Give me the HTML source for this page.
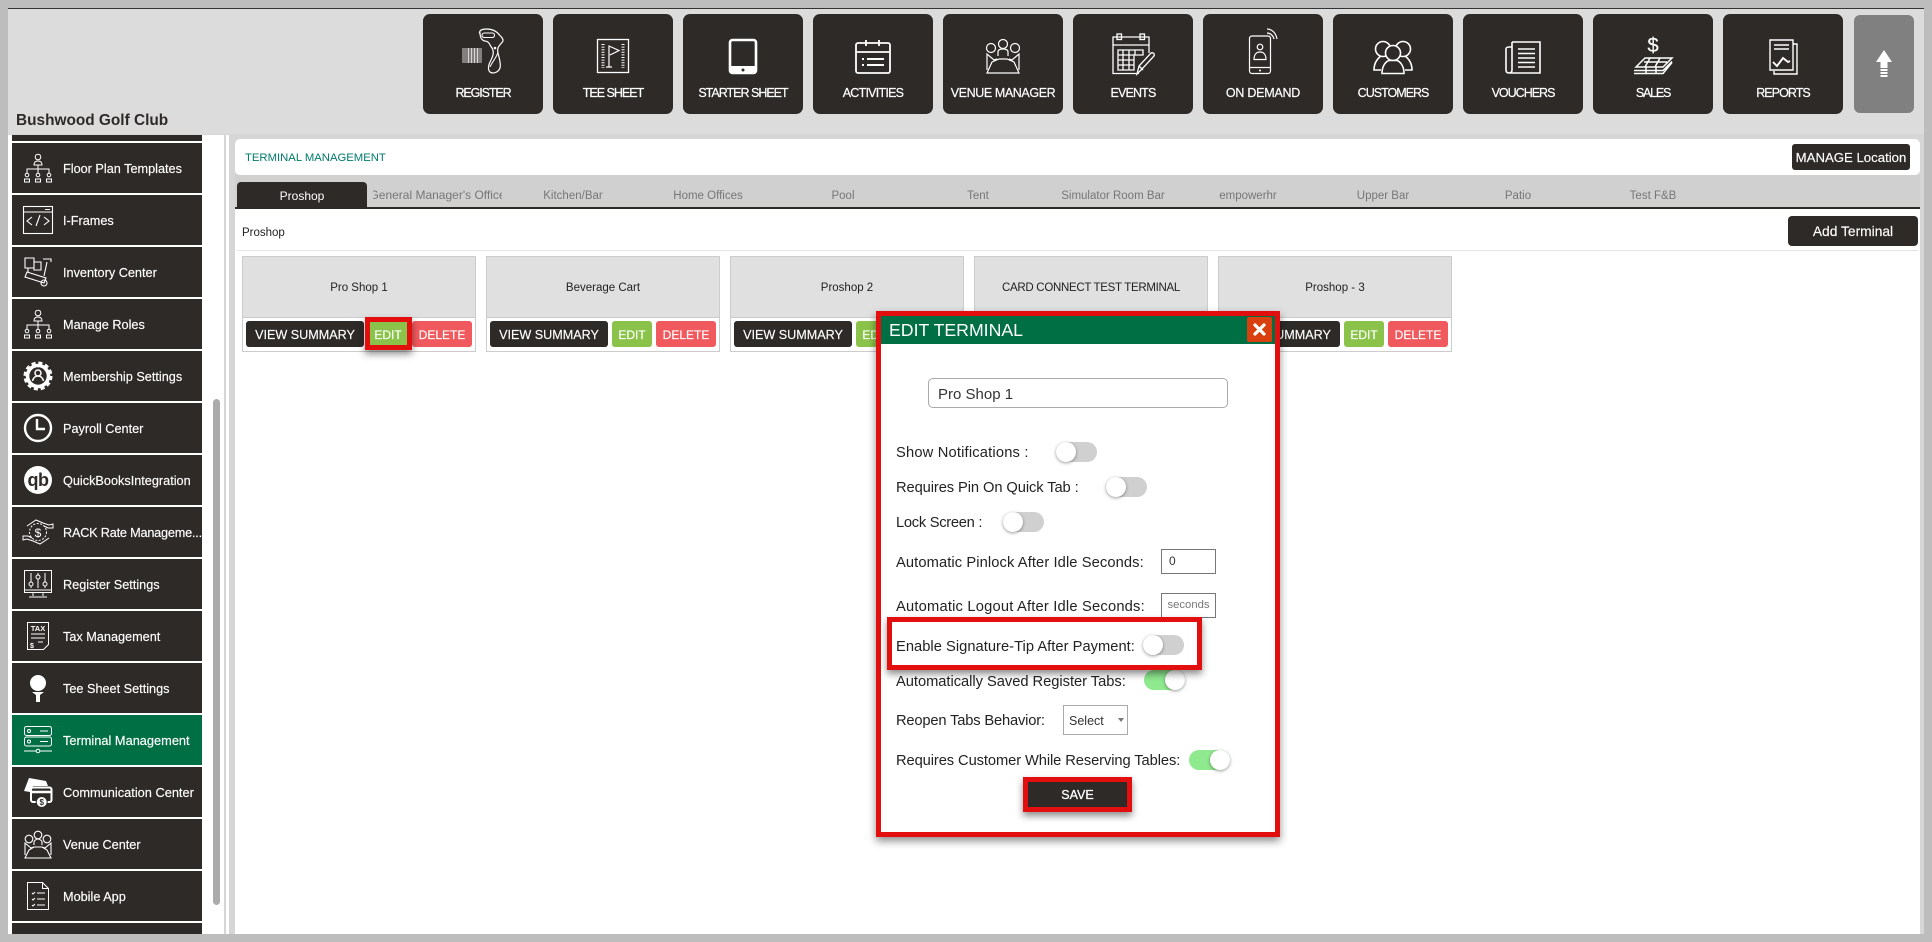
<!DOCTYPE html>
<html><head><meta charset="utf-8"><title>Terminal Management</title>
<style>
html,body{margin:0;padding:0;width:1932px;height:942px;overflow:hidden;background:#bdbdbd;font-family:"Liberation Sans",sans-serif}
div,span{position:absolute;box-sizing:border-box}
.c{display:flex;align-items:center;justify-content:center;white-space:nowrap}
.hb{top:14px;width:120px;height:100px;background:#2e2a28;border-radius:7px;color:#fff;font-size:12.5px;text-align:center;padding-top:71px;line-height:16px;white-space:nowrap;-webkit-text-stroke:.2px #fff}
.si{left:12px;width:190px;height:50px;background:#2e2a28;color:#fff;font-size:12.7px;line-height:52px;padding-left:51px;white-space:nowrap;-webkit-text-stroke:.15px #fff}
.tab{top:182px;width:130px;height:25px;color:#777;font-size:11.5px;line-height:28px;text-align:center;white-space:nowrap;overflow:hidden}
.card{top:256px;width:234px;height:96px;border:1px solid #ccc;background:#fff}
.ch{left:0;top:0;width:232px;height:61px;background:#e0e0e0;border-bottom:1px solid #ccc;color:#222;font-size:11.5px;padding-top:2px}
.b{top:64px;height:26px;border-radius:3px;color:#fff;font-size:12.6px;padding-top:1px;-webkit-text-stroke:.15px #fff}
.v{left:3px;width:118px;background:#2e2a28}
.e{left:125px;width:40px;background:#8bc34a;font-size:12px}
.d{left:169px;width:60px;background:#f0595e;font-size:12px}
.l{left:896px;color:#222;font-size:14.7px;white-space:nowrap;line-height:20px}
.t{width:41px;height:20px;border-radius:10px;background:#d0d0d0}
.t i{position:absolute;left:0;top:0;width:20px;height:20px;border-radius:50%;background:#fff;box-shadow:0 1px 3px rgba(0,0,0,.4)}
.t.on{background:#8fe98f}.t.on i{left:21px}
.rb{border:5px solid #e30f0f;box-shadow:0 4px 7px rgba(0,0,0,.45)}
</style></head><body>
<div style="left:8px;top:8px;width:1916px;height:1px;background:#333"></div>
<div style="left:8px;top:9px;width:1916px;height:125px;background:#dcdcdc"></div>
<div style="left:8px;top:134px;width:1916px;height:800px;background:#d6d6d6"></div>
<div style="left:16px;top:111px;font-size:15.4px;font-weight:bold;color:#2e2a28;line-height:20px;white-space:nowrap">Bushwood Golf Club</div>

<div class="hb" style="left:423px;letter-spacing:-1.1px">REGISTER</div>
<div class="hb" style="left:553px;letter-spacing:-1px">TEE SHEET</div>
<div class="hb" style="left:683px;letter-spacing:-1px">STARTER SHEET</div>
<div class="hb" style="left:813px;letter-spacing:-.75px">ACTIVITIES</div>
<div class="hb" style="left:943px;letter-spacing:-.4px">VENUE MANAGER</div>
<div class="hb" style="left:1073px;letter-spacing:-.85px">EVENTS</div>
<div class="hb" style="left:1203px;letter-spacing:-.25px">ON DEMAND</div>
<div class="hb" style="left:1333px;letter-spacing:-1px">CUSTOMERS</div>
<div class="hb" style="left:1463px;letter-spacing:-1px">VOUCHERS</div>
<div class="hb" style="left:1593px;letter-spacing:-1.2px">SALES</div>
<div class="hb" style="left:1723px;letter-spacing:-.95px">REPORTS</div>
<div style="left:1854px;top:15px;width:60px;height:98px;background:#808080;border-radius:6px"></div>

<!-- sidebar -->
<div style="left:8px;top:135px;width:216px;height:799px;background:#fff"></div>
<div style="left:226px;top:135px;width:3px;height:799px;background:#fff"></div>
<div style="left:12px;top:135px;width:190px;height:6px;background:#2e2a28"></div>
<div class="si" style="top:143px">Floor Plan Templates</div>
<div class="si" style="top:195px">I-Frames</div>
<div class="si" style="top:247px">Inventory Center</div>
<div class="si" style="top:299px">Manage Roles</div>
<div class="si" style="top:351px">Membership Settings</div>
<div class="si" style="top:403px">Payroll Center</div>
<div class="si" style="top:455px">QuickBooksIntegration</div>
<div class="si" style="top:507px;letter-spacing:-.2px">RACK Rate Manageme...</div>
<div class="si" style="top:559px">Register Settings</div>
<div class="si" style="top:611px">Tax Management</div>
<div class="si" style="top:663px">Tee Sheet Settings</div>
<div class="si" style="top:715px;background:#006f44;font-size:12.8px">Terminal Management</div>
<div class="si" style="top:767px;font-size:12.8px">Communication Center</div>
<div class="si" style="top:819px">Venue Center</div>
<div class="si" style="top:871px">Mobile App</div>
<div style="left:12px;top:923px;width:190px;height:11px;background:#2e2a28"></div>
<div style="left:213px;top:399px;width:7px;height:506px;background:#ababab;border-radius:4px"></div>

<!-- main -->
<div style="left:235px;top:139px;width:1685px;height:36px;background:#fff;border-radius:5px"></div>
<div style="left:245px;top:151px;font-size:11.3px;line-height:14px;color:#007a6c;white-space:nowrap">TERMINAL MANAGEMENT</div>
<div class="c" style="left:1792px;top:144px;width:118px;height:26px;background:#2e2a28;border-radius:3px;color:#fff;font-size:13.2px;padding-top:1px;-webkit-text-stroke:.15px #fff">MANAGE Location</div>
<div style="left:235px;top:175px;width:1685px;height:32px;background:#d0d0d0"></div>
<div style="left:235px;top:207px;width:1685px;height:2px;background:#2e2a28"></div>
<div style="left:235px;top:209px;width:1685px;height:725px;background:#fff"></div>
<div class="tab" style="left:237px;background:#2e2a28;color:#fff;border-radius:4px 4px 0 0;font-size:12px">Proshop</div>
<div class="tab c" style="left:373px;width:129px;font-size:12px;padding-top:1px">General Manager's Office</div>
<div class="tab" style="left:508px">Kitchen/Bar</div>
<div class="tab" style="left:643px">Home Offices</div>
<div class="tab" style="left:778px">Pool</div>
<div class="tab" style="left:913px">Tent</div>
<div class="tab" style="left:1048px">Simulator Room Bar</div>
<div class="tab" style="left:1183px">empowerhr</div>
<div class="tab" style="left:1318px">Upper Bar</div>
<div class="tab" style="left:1453px">Patio</div>
<div class="tab" style="left:1588px">Test F&amp;B</div>
<div style="left:242px;top:226px;font-size:11.5px;line-height:14px;color:#222">Proshop</div>
<div style="left:237px;top:250px;width:1681px;height:1px;background:#e3e3e3"></div>
<div class="c" style="left:1788px;top:216px;width:130px;height:30px;background:#2e2a28;border-radius:4px;color:#fff;font-size:13.8px;padding-top:1px;-webkit-text-stroke:.15px #fff">Add Terminal</div>

<div class="card" style="left:242px"><div class="ch c">Pro Shop 1</div><div class="b c v">VIEW SUMMARY</div><div class="b c e">EDIT</div><div class="b c d">DELETE</div></div>
<div class="card" style="left:486px"><div class="ch c">Beverage Cart</div><div class="b c v">VIEW SUMMARY</div><div class="b c e">EDIT</div><div class="b c d">DELETE</div></div>
<div class="card" style="left:730px"><div class="ch c">Proshop 2</div><div class="b c v">VIEW SUMMARY</div><div class="b c e">EDIT</div><div class="b c d">DELETE</div></div>
<div class="card" style="left:974px"><div class="ch c" style="letter-spacing:-.3px">CARD CONNECT TEST TERMINAL</div><div class="b c v">VIEW SUMMARY</div><div class="b c e">EDIT</div><div class="b c d">DELETE</div></div>
<div class="card" style="left:1218px"><div class="ch c">Proshop - 3</div><div class="b c v">VIEW SUMMARY</div><div class="b c e">EDIT</div><div class="b c d">DELETE</div></div>
<div class="rb" style="left:365px;top:317px;width:47px;height:33px"></div>

<!-- icons -->
<svg width="1932" height="942" viewBox="0 0 1932 942" style="position:absolute;left:0;top:0" fill="none" stroke="#fff" stroke-width="1.3">
<!-- register -->
<g stroke-width=".8"><path d="M463 48v15M465 48v15M467 48v15M468.500 48v15M470 48v15M471.500 48v15M473 48v15M474.500 48v15M476 48v15M477.500 48v15M479 48v15M481 48v15"/></g>
<path stroke-width="1.2" d="M479.500 33c0-3 3-4 7-4 5 0 10 2 13 6 2 2 4 4 3.500 6-1 2-4 4-5 7-1 3 0 5 1 9 1 4 2 8 1 11-1 3-4 5-7 5-2 0-4-1-4.500-4-.5-3 1-6 3-10 2-4 2.500-7 1-10-1-2-2-3-3-5-1-2-3-3-5-3-3-1-4.500-4-4.500-8z"/>
<path stroke-width="1" d="M498 52c-1 5-6 10-8 15"/>
<rect x="482" y="33" width="12.500" height="4.500" rx="2.200" stroke-width="1.100"/><circle cx="495" cy="48" r="1.300" fill="#fff" stroke="none"/>
<!-- tee sheet -->
<rect x="597.500" y="39.500" width="31" height="33"/>
<g stroke-dasharray="1 1.600" stroke-width="3"><path d="M603 44v24M623 44v24"/></g>
<path stroke-width="1.200" d="M609 67V46l10 4.500-9 4.500M606 67h6"/>
<!-- tablet -->
<rect x="730" y="40" width="26" height="33" rx="2.500" stroke-width="2.600"/><rect x="730" y="66" width="26" height="7" fill="#fff" stroke="none"/><circle cx="743" cy="70" r="1.500" fill="#2e2a28" stroke="none"/>
<!-- activities -->
<rect x="856" y="43" width="34" height="30" rx="2" stroke-width="1.800"/><path stroke-width="1.800" d="M856 52h34M866 40v6M879 40v6"/><path stroke-width="2" d="M862 59h2M862 65h2M867 59h17M867 65h17"/>
<!-- venue -->
<g stroke-width="1.200"><circle cx="991" cy="48" r="4.500"/><circle cx="1003" cy="44" r="4.500"/><circle cx="1015" cy="48" r="4.500"/><path d="M998 56v-4c0-2 2-3 5-3s5 1 5 3v4M987 70V54l7 6 3-1M1019 70V54l-7 6-3-1M992 62l7-3h8l7 3 5 11H987z"/></g>
<!-- events -->
<g stroke-width="1.300"><path d="M1149 53V37h-36v36.500h26"/><path d="M1113 45h36"/><rect x="1117" y="34" width="4.500" height="5.500"/><rect x="1140" y="34" width="4.500" height="5.500"/><path d="M1118 50h25v5h-25zM1118 55h16v15h-16zM1118 60h16M1118 65h16M1123 50v20M1129 50v20M1135 50v5"/><path d="M1137 74l2-8 12-13c2-1 4 1 3 3l-12 13zM1139 66l4 4"/></g>
<!-- on demand -->
<g stroke-width="1.200"><rect x="1249.500" y="36" width="21" height="37.500" rx="2.500"/><path d="M1250 67.500h20"/><circle cx="1260" cy="47" r="2.800"/><path d="M1254 59.500c0-5 2.500-7.500 6-7.500s6 2.500 6 7.500z"/><path d="M1267 33c3 0 6 2 7 6M1267 29c5 0 9 4 10 10"/></g><circle cx="1260" cy="70.500" r="1" fill="#fff" stroke="none"/>
<!-- customers -->
<g stroke-width="1.600"><circle cx="1383" cy="49" r="7.500"/><circle cx="1403" cy="49" r="7.500"/><path d="M1381 70h-7c0-7 3-11 7-14M1405 70h7c0-7-3-11-7-14"/><circle cx="1393" cy="53" r="7.500" fill="#2e2a28"/><path d="M1382 73.500c0-8 4-12 7-13h8c3 1 7 5 7 13z" fill="#2e2a28"/></g>
<!-- vouchers -->
<g stroke-width="1.600"><path d="M1512 42h28v31h-30"/><path d="M1512 42v28c0 2-1 3-3 3s-3-1-3-3V49c0-1 1-2 3-2h3"/><path stroke-width="1.400" d="M1518 49h17M1518 53.500h17M1518 58h17M1518 62.500h17M1518 67h17"/></g>
<!-- sales -->
<text x="1653" y="52" font-family="Liberation Sans,sans-serif" font-size="20" fill="#fff" stroke="#fff" stroke-width=".2" text-anchor="middle">$</text>
<g stroke-width="1.500"><path d="M1645 58h27l-9 9h-27zM1644 62h23M1650 58l-5 9M1660 58l-5 9M1634 73.500h29l9-11M1634 70.500h29l9-9"/><path d="M1646 67v7M1656 67v7"/></g>
<!-- reports -->
<g stroke-width="1.400"><path d="M1770 40h23v30h-23z"/><path d="M1793 44h4v30h-23v-3"/><path d="M1774 45h15M1774 49h15"/><path stroke-width="1.900" d="M1773 62l4 4 6-8 5 4 2-1"/></g>
<!-- arrow -->
<path d="M1884 50l8 12h-4.500v6h-7v-6H1876z" fill="#fff" stroke="none"/><path d="M1884 69v9" stroke="#fff" stroke-width="7" stroke-dasharray="2 1"/>

<!-- sidebar icons -->
<defs><g id="org" stroke-width="1"><circle cx="14" cy="3" r="2.800"/><path d="M10 11c0-3 2-4 4-4s4 1 4 4zM14 11v4M3 19v-4h22v4M14 15v4"/><circle cx="3" cy="21" r="1.800"/><circle cx="14" cy="21" r="1.800"/><circle cx="25" cy="21" r="1.800"/><path d="M.5 28v-3h5v3zM11.500 28v-3h5v3zM22.500 28v-3h5v3z"/></g>
<g id="ven" stroke-width="1.100"><circle cx="5" cy="9" r="3.800"/><circle cx="14" cy="5" r="3.800"/><circle cx="23" cy="9" r="3.800"/><path d="M10 15v-3c0-1 2-3 4-3s4 2 4 3v3M1 25V13l6 5 3-1M27 25V13l-6 5-3-1M5 20l5-3h8l5 3 4 8H1z"/></g></defs>
<use href="#org" x="24" y="154"/><use href="#org" x="24" y="310"/>
<g stroke-width="1.100"><rect x="23.500" y="206.500" width="29" height="27"/><path d="M23.500 212h29M45 209.500h5"/><path d="M32 217l-5 4 5 4M44 217l5 4-5 4M40 215l-4 11"/></g>
<g stroke-width="1.100"><path d="M25 258h9v10h-9zM34 262h7v8h-7zM47 262l-3 14M43 259h8v3M27 272l19 6-2 5-19-6zM28 268v4"/><circle cx="44" cy="283" r="3"/></g>
<g transform="translate(38 376)"><circle r="10.500" stroke-width="3.600"/><circle r="13" stroke-width="3" stroke-dasharray="4 2.800"/><circle cy="-3" r="3" stroke-width="1.500"/><path d="M-5.500 5c1-4 3-5 5.500-5s4.500 1 5.500 5" stroke-width="1.500"/></g>
<circle cx="38" cy="428" r="13" stroke-width="2.400"/><path d="M37 419v10h8" stroke-width="2.400"/>
<circle cx="38" cy="480" r="14" fill="#fff" stroke="none"/><text x="38" y="486" text-anchor="middle" font-family="Liberation Sans,sans-serif" font-size="18" font-weight="bold" letter-spacing="-.5" fill="#2e2a28" stroke="none">qb</text>
<g stroke-width="1"><circle cx="38" cy="532" r="8.500" stroke-dasharray="2 1.500"/><path d="M27 526l9-6 7 3 6 2 4-1v4h-5l-4-2M49 538l-9 6-7-3-6-2-4 1v-4h5l4 2"/></g><text x="38" y="537" text-anchor="middle" font-family="Liberation Sans,sans-serif" font-size="12" fill="#fff" stroke="none">$</text>
<g stroke-width="1"><path d="M24.500 570.500h27v22h-27zM24 590h28M33 593v3M43 593v3M29 597h18"/><path d="M31 573v15M38 573v15M45 573v15"/><circle cx="31" cy="584" r="2" fill="#2e2a28"/><circle cx="38" cy="577" r="2" fill="#2e2a28"/><circle cx="45" cy="584" r="2" fill="#2e2a28"/></g>
<g stroke-width="1"><path d="M27.500 622.500h21v22l-5 5h-16z"/><path d="M31 634h14M31 638h14M38 642h5"/></g><text x="38" y="631" text-anchor="middle" font-family="Liberation Sans,sans-serif" font-size="7.500" font-weight="bold" fill="#fff" stroke="none">TAX</text><text x="30" y="648" font-family="Liberation Sans,sans-serif" font-size="7" font-weight="bold" fill="#fff" stroke="none">$</text>
<circle cx="38" cy="683" r="8" fill="#fff" stroke="none"/><path d="M32 692h12l-4 3v7h-4v-7z" fill="#fff" stroke="none"/>
<g stroke-width="1"><rect x="24.500" y="726.500" width="27" height="9" rx="2"/><rect x="24.500" y="737" width="27" height="9" rx="2"/><circle cx="29" cy="731" r="1.500"/><circle cx="29" cy="741.500" r="1.500"/><path d="M40 731h8M40 741.500h8M24 751h28"/><circle cx="38" cy="751" r="1.800" fill="#006f44"/></g>
<path d="M29 778l17 3 2 5H33l-3 6-6-1z" fill="#fff" stroke="none"/><rect x="31" y="787.500" width="20.500" height="14.500" rx="2" stroke-width="2"/><path d="M31 792h20.500" stroke-width="2.500"/><circle cx="41.700" cy="802" r="5.500" fill="#fff" stroke="#2e2a28" stroke-width="1"/><text x="41.700" y="805" text-anchor="middle" font-family="Liberation Sans,sans-serif" font-size="8" font-weight="bold" fill="#2e2a28" stroke="none">$</text>
<use href="#ven" x="24" y="830"/>
<g stroke-width="1"><path d="M27.500 882.500h15l6 6v21h-21zM42.500 882.500v6h6"/><path d="M32 893l1 1 2-2M32 899l1 1 2-2M32 905l1 1 2-2M37 893h8M37 899h8M37 905h8"/></g>
</svg>

<!-- modal -->
<div style="left:876px;top:311px;width:404px;height:526px;background:#fff;border:5px solid #e30f0f;box-shadow:0 4px 8px rgba(0,0,0,.45)"></div>
<div style="left:881px;top:316px;width:394px;height:28px;background:#006f44"></div>
<div style="left:889px;top:319px;font-size:17.7px;line-height:22px;color:#fff;white-space:nowrap">EDIT TERMINAL</div>
<div class="c" style="left:1247px;top:317px;width:25px;height:25px;background:#d9400f;border-radius:2px"><svg width="13" height="13" viewBox="0 0 13 13"><path d="M2 2l9 9M11 2l-9 9" stroke="#fff" stroke-width="3.200" stroke-linecap="round"/></svg></div>
<div style="left:928px;top:378px;width:300px;height:30px;border:1px solid #aaa;border-radius:5px;font-size:15px;line-height:31px;padding-left:9px;color:#333">Pro Shop 1</div>

<div class="l" style="top:443px;letter-spacing:.18px">Show Notifications :</div><div class="t" style="left:1056px;top:442px"><i></i></div>
<div class="l" style="top:478px;letter-spacing:-.09px">Requires Pin On Quick Tab :</div><div class="t" style="left:1106px;top:477px"><i></i></div>
<div class="l" style="top:513px;letter-spacing:-.28px">Lock Screen :</div><div class="t" style="left:1003px;top:512px"><i></i></div>
<div class="l" style="top:553px;letter-spacing:.1px">Automatic Pinlock After Idle Seconds:</div>
<div style="left:1161px;top:549px;width:55px;height:25px;border:1px solid #777;font-size:12px;line-height:23px;padding-left:7px;color:#333">0</div>
<div class="l" style="top:597px;letter-spacing:.2px">Automatic Logout After Idle Seconds:</div>
<div style="left:1161px;top:593px;width:55px;height:25px;border:1px solid #777;font-size:11.3px;line-height:23px;text-align:center;color:#777;white-space:nowrap">seconds</div>
<div class="l" style="top:672px;letter-spacing:-.03px">Automatically Saved Register Tabs:</div><div class="t on" style="left:1144px;top:670px"><i></i></div>
<div class="rb" style="left:887px;top:617px;width:315px;height:53px;background:#fff"></div>
<div class="l" style="top:637px;letter-spacing:.03px">Enable Signature-Tip After Payment:</div><div class="t" style="left:1143px;top:635px"><i></i></div>
<div class="l" style="top:711px;letter-spacing:-.17px">Reopen Tabs Behavior:</div>
<div style="left:1063px;top:705px;width:65px;height:30px;border:1px solid #aaa;font-size:12.500px;line-height:30px;padding-left:5px;color:#333">Select<svg width="8" height="5" style="position:absolute;left:53px;top:12px"><path d="M1 0h6L4 4z" fill="#777"/></svg></div>
<div class="l" style="top:751px;letter-spacing:-.09px">Requires Customer While Reserving Tables:</div><div class="t on" style="left:1189px;top:750px"><i></i></div>
<div class="rb c" style="left:1023px;top:777px;width:109px;height:35px;background:#2e2a28;color:#fff;font-size:12.5px;-webkit-text-stroke:.25px #fff">SAVE</div>
</body></html>
